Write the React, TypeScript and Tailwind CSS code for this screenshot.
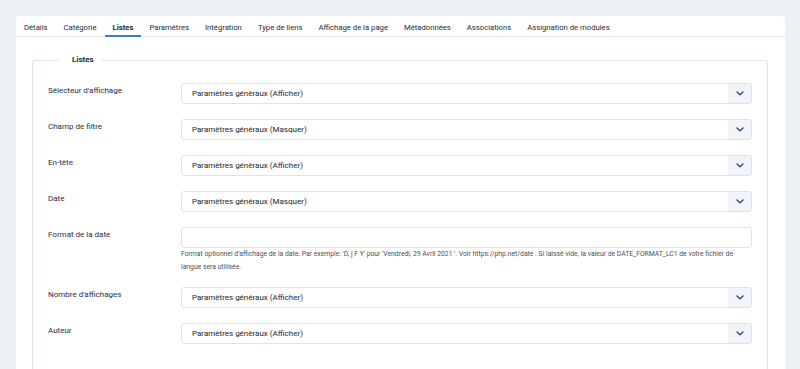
import React from "react";

const tabs = [
  "Détails",
  "Catégorie",
  "Listes",
  "Paramètres",
  "Intégration",
  "Type de liens",
  "Affichage de la page",
  "Métadonnées",
  "Associations",
  "Assignation de modules",
];

function Chevron() {
  return (
    <svg width="8" height="5" viewBox="0 0 8 5" fill="none">
      <path d="M1 1 L4 3.8 L7 1" stroke="#3a414c" strokeWidth="1.3" strokeLinecap="round" strokeLinejoin="round" />
    </svg>
  );
}

function Select({ value }: { value: string }) {
  return (
    <div className="flex h-[21px] items-stretch rounded-[3px] border border-[#dde3eb] bg-white">
      <div className="flex flex-1 items-center pl-[10px] text-[8px] text-[#22262a]">{value}</div>
      <div className="flex w-[23px] items-center justify-center rounded-r-[3px] bg-[#f0f3f8]">
        <Chevron />
      </div>
    </div>
  );
}

function Row({ label, children, last }: { label: string; children: React.ReactNode; last?: boolean }) {
  return (
    <div className={"flex " + (last ? "" : "mb-[15px]")}>
      <div className="w-[133px] shrink-0 pt-[2px] text-[8px] leading-[12px] text-[#1f2d44]">{label}</div>
      <div className="flex-1">{children}</div>
    </div>
  );
}

export default function App() {
  return (
    <div className="h-[369px] w-[800px] overflow-hidden bg-[#edf0f5] pl-4 pr-[15px] pt-4 font-['Roboto','Liberation_Sans',sans-serif]">
      <div className="h-[420px] rounded-t-[4px] bg-white">
        <div className="flex h-[21px] border-b border-[#e5e9ef] pl-0">
          {tabs.map((t) => (
            <div
              key={t}
              className={
                "relative flex items-center px-2 pt-[4px] text-[7.7px] text-[#1c2b41] " +
                (t === "Listes" ? "font-bold" : "")
              }
            >
              {t}
              {t === "Listes" && (
                <span className="absolute bottom-[-1px] left-0 right-0 h-[2px] bg-[#3d79c4]" />
              )}
            </div>
          ))}
        </div>
        <fieldset className="mx-4 mr-[17px] mt-[17px] rounded-[2px] border border-[#dfe6f0] px-[15px] pb-[60px] pt-[17px]">
          <legend className="ml-[11px] pl-[13px] pr-2 text-[8px] font-bold leading-[12px] text-[#1c2b41]">Listes</legend>
          <Row label="Sélecteur d'affichage">
            <Select value="Paramètres généraux (Afficher)" />
          </Row>
          <Row label="Champ de filtre">
            <Select value="Paramètres généraux (Masquer)" />
          </Row>
          <Row label="En-tête">
            <Select value="Paramètres généraux (Afficher)" />
          </Row>
          <Row label="Date">
            <Select value="Paramètres généraux (Masquer)" />
          </Row>
          <div className="mb-[13px] flex">
            <div className="w-[133px] shrink-0 pt-[2px] text-[8px] leading-[12px] text-[#1f2d44]">Format de la date</div>
            <div className="flex-1">
              <div className="h-[21px] rounded-[3px] border border-[#dde3eb] bg-white" />
              <div className="text-[6.8px] leading-[13px] text-[#4a4f57]">
                Format optionnel d'affichage de la date. Par exemple: 'D, j F Y' pour 'Vendredi, 29 Avril 2021 '. Voir https://php.net/date . Si laissé vide, la valeur de DATE_FORMAT_LC1 de votre fichier de
                <br />
                langue sera utilisée.
              </div>
            </div>
          </div>
          <Row label="Nombre d'affichages">
            <Select value="Paramètres généraux (Afficher)" />
          </Row>
          <Row label="Auteur" last>
            <Select value="Paramètres généraux (Afficher)" />
          </Row>
        </fieldset>
      </div>
    </div>
  );
}
